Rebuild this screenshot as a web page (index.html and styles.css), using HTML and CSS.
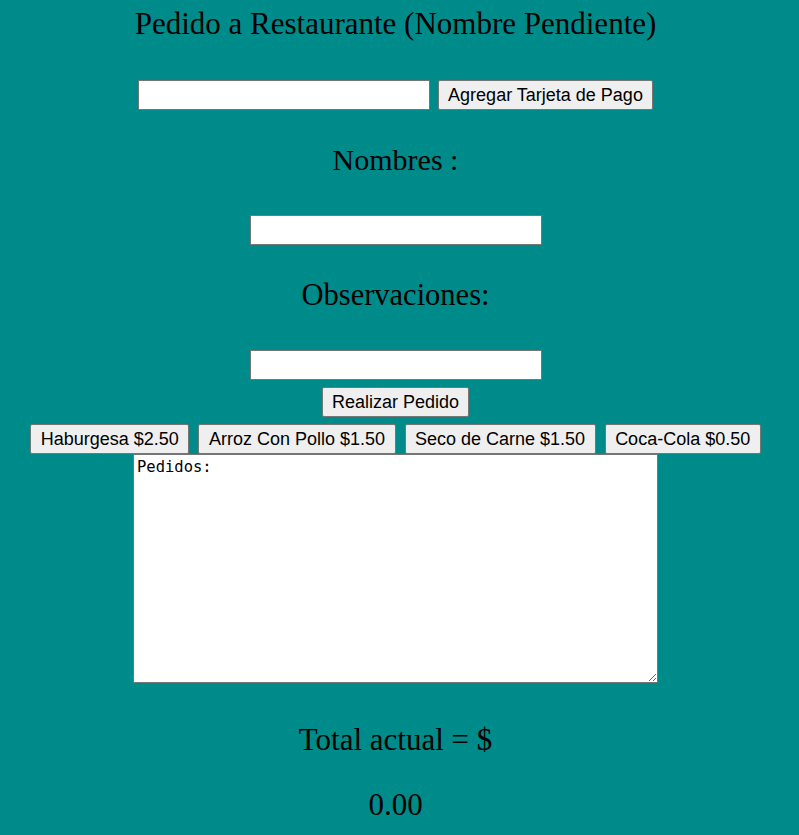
FILE: index.html
```html
<!DOCTYPE html>
<html lang="es">

<head>
    <meta charset="UTF-8">
    <title>Pedido a Restaurante</title>
    <link rel="stylesheet" href="styles.css">
</head>

<body>
    <div class="page">
        <h1 class="title">Pedido a Restaurante (Nombre Pendiente)</h1>

        <div class="row card-row">
            <input type="text" id="tarjeta" class="field">
            <button class="btn">Agregar Tarjeta de Pago</button>
        </div>

        <h2 class="label label-nombres">Nombres :</h2>
        <input type="text" id="nombres" class="field field-nombres">

        <h2 class="label label-obs">Observaciones:</h2>
        <input type="text" id="observaciones" class="field field-obs">

        <button class="btn btn-pedido">Realizar Pedido</button>

        <div class="row menu">
            <button class="btn">Haburgesa $2.50</button>
            <button class="btn">Arroz Con Pollo $1.50</button>
            <button class="btn">Seco de Carne $1.50</button>
            <button class="btn">Coca-Cola $0.50</button>
        </div>

        <textarea id="pedidos" class="pedidos">Pedidos:</textarea>

        <h2 class="label label-total">Total actual = $</h2>
        <h2 class="label label-monto" id="total">0.00</h2>
    </div>
</body>

</html>
```

FILE: styles.css
```css
* {
    box-sizing: border-box;
}

body {
    margin: 0;
    padding: 0 8px 0 0;
    background: #008b8b;
    font-family: "Liberation Serif", "Times New Roman", serif;
    color: #000;
}

.page {
    display: flex;
    flex-direction: column;
    align-items: center;
}

.title,
.label {
    font-weight: normal;
    font-size: 30px;
    line-height: 34px;
    margin: 0;
}

.title {
    font-size: 31px;
    margin-top: 7px;
}

.row {
    display: flex;
    gap: 8px;
}

.card-row {
    margin-top: 39px;
}

.field {
    width: 292px;
    height: 30px;
    border: 1px solid #767676;
    background: #fff;
    padding: 0 4px;
    font-size: 16px;
}

.btn {
    height: 30px;
    padding: 0 9px;
    border: 1px solid #767676;
    border-radius: 2px;
    background: #efefef;
    font-family: "Liberation Sans", Arial, sans-serif;
    font-size: 18px;
    color: #000;
}

.label-nombres {
    margin-top: 33px;
}

.field-nombres {
    margin-top: 38px;
}

.label-obs {
    margin-top: 33px;
    font-size: 30.5px;
}

.field-obs {
    margin-top: 38px;
}

.btn-pedido {
    margin-top: 7px;
}

.menu {
    margin-top: 7px;
    gap: 9px;
}

.menu .btn {
    padding: 0 9.5px;
}

.pedidos {
    width: 525px;
    height: 229px;
    border: 1px solid #767676;
    padding: 3px 3px;
    font-family: "DejaVu Sans Mono", monospace;
    font-size: 15.5px;
    resize: both;
}

.label-total {
    font-size: 31px;
    margin-top: 40px;
}

.label-monto {
    font-size: 31px;
    margin-top: 31px;
}
```
